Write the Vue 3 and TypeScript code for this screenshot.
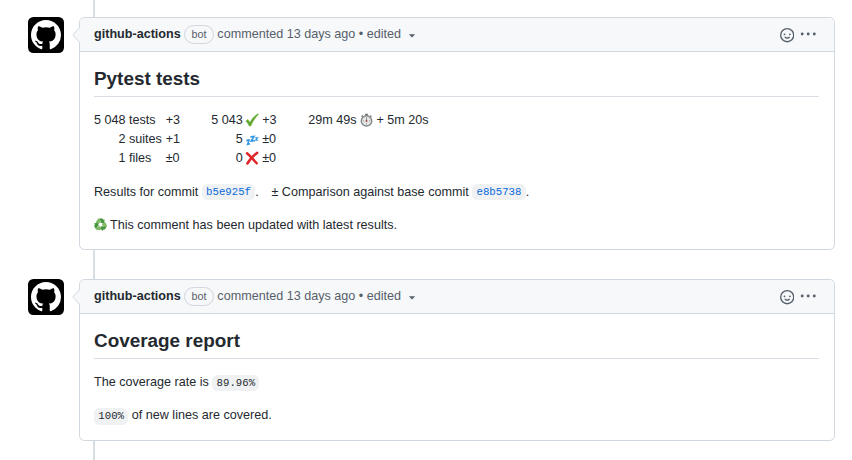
<script setup lang="ts">
import { defineComponent, h } from 'vue'

interface Stat {
  count: string
  label: string
  delta: string
  result: string
  icon: 'check' | 'zzz' | 'cross'
  change: string
}

const comments: { id: string; title: string }[] = [
  { id: 'pytest', title: 'Pytest tests' },
  { id: 'coverage', title: 'Coverage report' },
]

const stats: Stat[] = [
  { count: '5 048', label: 'tests', delta: '+3', result: '5 043', icon: 'check', change: '+3' },
  { count: '2', label: 'suites', delta: '+1', result: '5', icon: 'zzz', change: '±0' },
  { count: '1', label: 'files', delta: '±0', result: '0', icon: 'cross', change: '±0' },
]

const markPath =
  'M8 0C3.58 0 0 3.58 0 8c0 3.54 2.29 6.53 5.47 7.59.4.07.55-.17.55-.38 0-.19-.01-.82-.01-1.49-2.01.37-2.53-.49-2.69-.94-.09-.23-.48-.94-.82-1.13-.28-.15-.68-.52-.01-.53.63-.01 1.08.58 1.23.82.72 1.21 1.87.87 2.33.66.07-.52.28-.87.51-1.07-1.78-.2-3.64-.89-3.64-3.95 0-.87.31-1.59.82-2.15-.08-.2-.36-1.02.08-2.12 0 0 .67-.21 2.2.82.64-.18 1.32-.27 2-.27.68 0 1.36.09 2 .27 1.53-1.04 2.2-.82 2.2-.82.44 1.1.16 1.92.08 2.12.51.56.82 1.27.82 2.15 0 3.07-1.87 3.75-3.65 3.95.29.25.54.73.54 1.48 0 1.07-.01 1.93-.01 2.2 0 .21.15.46.55.38A8.013 8.013 0 0016 8c0-4.42-3.58-8-8-8z'

const smileyPath =
  'M1.5 8a6.5 6.5 0 1113 0 6.5 6.5 0 01-13 0zM8 0a8 8 0 100 16A8 8 0 008 0zM5 8a1 1 0 100-2 1 1 0 000 2zm7-1a1 1 0 11-2 0 1 1 0 012 0zM5.32 9.636a.75.75 0 011.038.175l.007.009c.103.118.22.222.35.31.264.178.683.37 1.285.37.602 0 1.02-.192 1.285-.371.13-.088.247-.192.35-.31l.007-.008a.75.75 0 111.222.87l-.014.019a1.984 1.984 0 01-.184.213c-.16.166-.338.316-.53.445-.63.418-1.37.638-2.127.629-.946 0-1.652-.308-2.126-.63a3.331 3.331 0 01-.715-.657l-.014-.02a.75.75 0 01.183-1.044z'

const Mark = defineComponent({
  setup: () => () =>
    h('svg', { viewBox: '0 0 16 16', width: 30, height: 30, fill: '#fff' }, [h('path', { d: markPath })]),
})
</script>

<template>
  <main class="timeline">
    <article v-for="comment in comments" :key="comment.id" class="item">
      <div class="avatar"><Mark /></div>
      <section class="card">
        <svg class="pointer" viewBox="0 0 8 16" width="8" height="16">
          <path d="M7.5 0.8 L1.3 7.5 V8.5 L7.5 15.2 H8 V0.8 Z" fill="#f6f8fa" />
          <path d="M7.5 0.8 L1.3 7.5 V8.5 L7.5 15.2" fill="none" stroke="#d0d7de" />
        </svg>
        <header class="head">
          <strong class="author">github-actions</strong>
          <span class="bot">bot</span>
          <span class="meta">commented 13 days ago • edited</span>
          <svg class="caret" viewBox="0 0 8 4" width="8" height="4"><path d="M.9 .3h6.3L4 3.6z" /></svg>
          <div class="actions">
            <svg class="smiley" viewBox="0 0 16 16" width="14.4" height="14.4"><path :d="smileyPath" fill-rule="evenodd" /></svg>
            <svg class="dots" viewBox="0 0 16 4" width="16" height="4">
              <circle cx="2.2" cy="2" r="1.45" /><circle cx="8.2" cy="2" r="1.45" /><circle cx="14.3" cy="2" r="1.45" />
            </svg>
          </div>
        </header>
        <div class="body">
          <h2>{{ comment.title }}</h2>
          <template v-if="comment.id === 'pytest'">
            <div class="stats">
              <div v-for="(s, i) in stats" :key="s.label" class="stat">
                <span class="num">{{ s.count }}</span>
                <span class="label">{{ s.label }}</span>
                <span>{{ s.delta }}</span>
                <span class="num">{{ s.result }}</span>
                <span class="icon">
                  <svg v-if="s.icon === 'check'" viewBox="0 0 14 14" width="14" height="14">
                    <path d="M.7 8 2.9 6.4 5 9.2C7.2 5.3 9.8 2.3 13.2.7l.3.9C10.5 4.3 7.9 8.4 5.9 13H4.1C3.3 11 2.1 9.2.7 8z" fill="#5fa532" stroke="#82bd4b" stroke-width=".5" />
                  </svg>
                  <svg v-else-if="s.icon === 'zzz'" viewBox="0 0 14 14" width="14" height="14" fill="none" stroke="#3597e0">
                    <path d="M1.3 8.6 4.1 8 2.6 12.3 5 11.7" stroke-width="1.6" />
                    <path d="M5.4 4.9 9 4.5 6.2 9 9.8 8.6" stroke-width="1.6" />
                    <path d="M10.2 5.9h2.4l-2 2.4h2.5" stroke-width="1.1" />
                  </svg>
                  <svg v-else viewBox="0 0 14 14" width="14" height="14" fill="none" stroke="#df2528" stroke-linecap="round">
                    <path d="M2 2.2C5 4.8 8.5 8.6 11.7 12.3M12.2 1.9C8 4.6 5 8.2 2.4 12.5" stroke-width="2.5" />
                  </svg>
                </span>
                <span>{{ s.change }}</span>
                <span v-if="i === 0" class="duration">
                  29m 49s
                  <svg class="watch" viewBox="0 0 13 14" width="13" height="14">
                    <path d="M5 .7h3v2H5zM1.1 3.3l1.3-1.2 1 1-1.3 1.2zM10.6 2.1l1.3 1.2-1 1-1-1z" fill="#777b7d" />
                    <circle cx="6.5" cy="7.9" r="5.2" fill="#e5e7e7" stroke="#85898b" stroke-width="1.5" />
                    <path d="M6.5 4.3v3.6M3.2 7.9h.8M9 7.9h.8M6.5 10.4v.8" stroke="#777" stroke-width=".8" />
                    <circle cx="6.5" cy="8" r="1" fill="#a34646" />
                  </svg>
                  + 5m 20s
                </span>
              </div>
            </div>
            <p>Results for commit <code class="link">b5e925f</code>.<span class="compare">± Comparison against base commit <code class="link">e8b5738</code>.</span></p>
            <p class="updated">
              <svg class="recycle" viewBox="0 0 13 13" width="13" height="13">
                <g v-for="turn in [0, 120, 240]" :key="turn" :transform="`rotate(${turn} 6.5 6.7)`">
                  <path d="M2.1 4.3 3.8 1.3Q4.500.5 5.600.5H8.500L9.700 2.100 10.900 1.500 9.800 5.200 5.700 4.700 7 3.900 6.200 2.800 5 5.700z" fill="#46963c" />
                  <path d="M2.1 4.3 3.8 1.3Q4.500.5 5.600.5L6.200 2.800 5 5.700z" fill="#85bd66" />
                </g>
              </svg>
              <span>This comment has been updated with latest results.</span>
            </p>
          </template>
          <template v-else>
            <p>The coverage rate is <code>89.96%</code></p>
            <p><code>100%</code> of new lines are covered.</p>
          </template>
        </div>
      </section>
    </article>
  </main>
</template>

<style>
body {
  margin: 0;
  background: #fff;
}
</style>

<style scoped>
.timeline {
  box-sizing: border-box;
  height: 460px;
  overflow: hidden;
  padding: 17px 17px 0 28px;
  display: flex;
  flex-direction: column;
  gap: 29px;
  background: linear-gradient(#d8dee4, #d8dee4) 93px 0 / 2px 100% no-repeat;
  font: 12.6px/18.9px 'Liberation Sans', Arial, sans-serif;
  color: #24292f;
}
.item {
  display: flex;
  align-items: flex-start;
  gap: 15px;
}
.avatar {
  width: 36px;
  height: 36px;
  border-radius: 5.4px;
  background: #000;
  display: grid;
  place-items: center;
}
.card {
  position: relative;
  box-sizing: border-box;
  flex: 1;
  border: 1px solid #d0d7de;
  border-radius: 5.4px;
  background: #fff;
}
.pointer {
  position: absolute;
  left: -8px;
  top: 9px;
}
.head {
  box-sizing: border-box;
  height: 34px;
  padding: 0 18px 0 14px;
  display: flex;
  align-items: center;
  border-bottom: 1px solid #d0d7de;
  border-radius: 4.4px 4.4px 0 0;
  background: #f6f8fa;
  color: #57606a;
  white-space: nowrap;
}
.author {
  color: #24292f;
}
.bot {
  box-sizing: border-box;
  height: 19px;
  margin: 0 3.5px;
  padding: 0 6.3px;
  border: 1px solid #d0d7de;
  border-radius: 10px;
  font-size: 10.8px;
  line-height: 17px;
}
.caret {
  margin: 3px 0 0 7px;
  fill: #57606a;
}
.actions {
  margin-left: auto;
  display: flex;
  align-items: center;
  gap: 6px;
  fill: #57606a;
}
.smiley {
  margin-top: 2px;
}
.dots {
  margin-top: -1px;
}
.body {
  padding: 15px 15px 14px 14px;
}
.item:last-child .body {
  padding-bottom: 15px;
}
h2 {
  margin: 0 0 14.2px;
  padding-bottom: 5.5px;
  border-bottom: 1px solid #d8dee4;
  font-size: 18.9px;
  line-height: 23.6px;
}
.stats {
  margin-bottom: 14.7px;
}
.stat {
  height: 18.9px;
  display: grid;
  grid-template-columns: 31.5px 40.2px 31px 46px 19.5px 46px auto;
  justify-content: start;
  white-space: nowrap;
}
.num {
  text-align: right;
}
.label {
  padding-left: 3.5px;
}
.icon {
  padding: 2px 0 0 2.5px;
  line-height: 0;
}
.watch {
  margin: 0 0 -3px;
}
p {
  margin: 0 0 14.4px;
  height: 18.9px;
  white-space: nowrap;
}
p:last-child {
  margin-bottom: 0;
}
.compare {
  margin-left: 12.6px;
}
code {
  padding: 0.2em 0.4em;
  border-radius: 5.4px;
  background: rgba(175, 184, 193, 0.2);
  font: 10.71px 'Liberation Mono', monospace;
}
.link {
  color: #0969da;
  vertical-align: 0.6px;
}
.updated {
  display: flex;
  align-items: center;
  gap: 3px;
}
.recycle {
  margin-top: -1px;
}
</style>
